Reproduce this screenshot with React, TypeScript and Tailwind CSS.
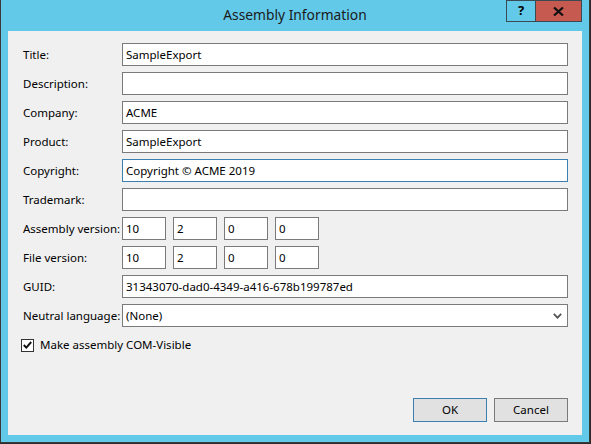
import React from "react";

// ─── Field rows ───────────────────────────────────────────────────────────────

const fields: { label: string; value: string; focused?: boolean }[] = [
  { label: "Title:", value: "SampleExport" },
  { label: "Description:", value: "" },
  { label: "Company:", value: "ACME" },
  { label: "Product:", value: "SampleExport" },
  { label: "Copyright:", value: "Copyright © ACME 2019", focused: true },
  { label: "Trademark:", value: "" },
];

function TextBox({ value, focused }: { value: string; focused?: boolean }) {
  return (
    <div
      className={`h-[23px] flex-1 bg-white border flex items-center px-[3px] ${
        focused ? "border-[#3c7fb1]" : "border-[#7a7a7a]"
      }`}
    >
      {value}
    </div>
  );
}

function VersionBoxes({ parts }: { parts: string[] }) {
  return (
    <div className="flex gap-[7px]">
      {parts.map((p, i) => (
        <div
          key={i}
          className="w-[44px] h-[23px] bg-white border border-[#7a7a7a] flex items-center px-[3px]"
        >
          {p}
        </div>
      ))}
    </div>
  );
}

function Row({ label, children }: { label: string; children: React.ReactNode }) {
  return (
    <div className="flex items-center h-[23px]">
      <div className="w-[99px] shrink-0 whitespace-nowrap">{label}</div>
      {children}
    </div>
  );
}

// ─── Dialog ───────────────────────────────────────────────────────────────────

export default function App() {
  return (
    <div
      className="w-[591px] h-[444px] bg-[#2b2b2b] text-[11.5px] text-black"
      style={{ fontFamily: '"Noto Sans", "Open Sans", sans-serif' }}
    >
      <div className="w-[590px] h-[443px] border-l border-r border-b border-[#3a3a3a] bg-[#63c9e9] flex flex-col">
        {/* Title bar */}
        <div className="h-[31px] shrink-0 relative flex items-center justify-center">
          <span className="text-[13.8px] text-[#1a1a1a]">Assembly Information</span>
          <div className="absolute top-0 right-[7px] flex">
            <div className="w-[30px] h-[22px] border border-[#3a4a55] flex items-center justify-center font-bold text-[13px]">
              ?
            </div>
            <div className="w-[46px] h-[22px] border border-l-0 border-[#3a4a55] bg-[#c75a50] flex items-center justify-center">
              <svg width="11" height="9" viewBox="0 0 11 9">
                <path d="M1 0.5 L10 8.5 M10 0.5 L1 8.5" stroke="#111" strokeWidth="2.2" />
              </svg>
            </div>
          </div>
        </div>

        {/* Client area */}
        <div className="mx-[7px] mb-[7px] flex-1 bg-[#f0f0f0] flex flex-col pl-[15px] pr-[14px] pt-[12px]">
          <div className="flex flex-col gap-[6px]">
            {fields.map((f) => (
              <Row key={f.label} label={f.label}>
                <TextBox value={f.value} focused={f.focused} />
              </Row>
            ))}
            <Row label="Assembly version:">
              <VersionBoxes parts={["10", "2", "0", "0"]} />
            </Row>
            <Row label="File version:">
              <VersionBoxes parts={["10", "2", "0", "0"]} />
            </Row>
            <Row label="GUID:">
              <TextBox value="31343070-dad0-4349-a416-678b199787ed" />
            </Row>
            <Row label="Neutral language:">
              <div className="h-[23px] flex-1 bg-white border border-[#7a7a7a] flex items-center justify-between px-[3px]">
                <span>(None)</span>
                <svg width="9" height="6" viewBox="0 0 9 6" className="mr-[2px]">
                  <path d="M0.8 0.8 L4.5 4.6 L8.2 0.8" fill="none" stroke="#555" strokeWidth="1.8" />
                </svg>
              </div>
            </Row>
          </div>

          {/* Checkbox */}
          <div className="flex items-center mt-[9px] -ml-[2px]">
            <div className="w-[13px] h-[13px] border border-[#333] bg-white flex items-center justify-center">
              <svg width="9" height="8" viewBox="0 0 9 8">
                <path d="M0.8 4 L3.3 6.6 L8.2 1" fill="none" stroke="#111" strokeWidth="1.9" />
              </svg>
            </div>
            <span className="ml-[6px] pb-[1px]">Make assembly COM-Visible</span>
          </div>

          {/* Buttons */}
          <div className="mt-auto mb-[13px] flex justify-end gap-[7px]">
            <button className="w-[74px] h-[24px] bg-[#e1e1e1] border border-[#3c7fb1]">OK</button>
            <button className="w-[74px] h-[24px] bg-[#e1e1e1] border border-[#7a7a7a]">Cancel</button>
          </div>
        </div>
      </div>
    </div>
  );
}
